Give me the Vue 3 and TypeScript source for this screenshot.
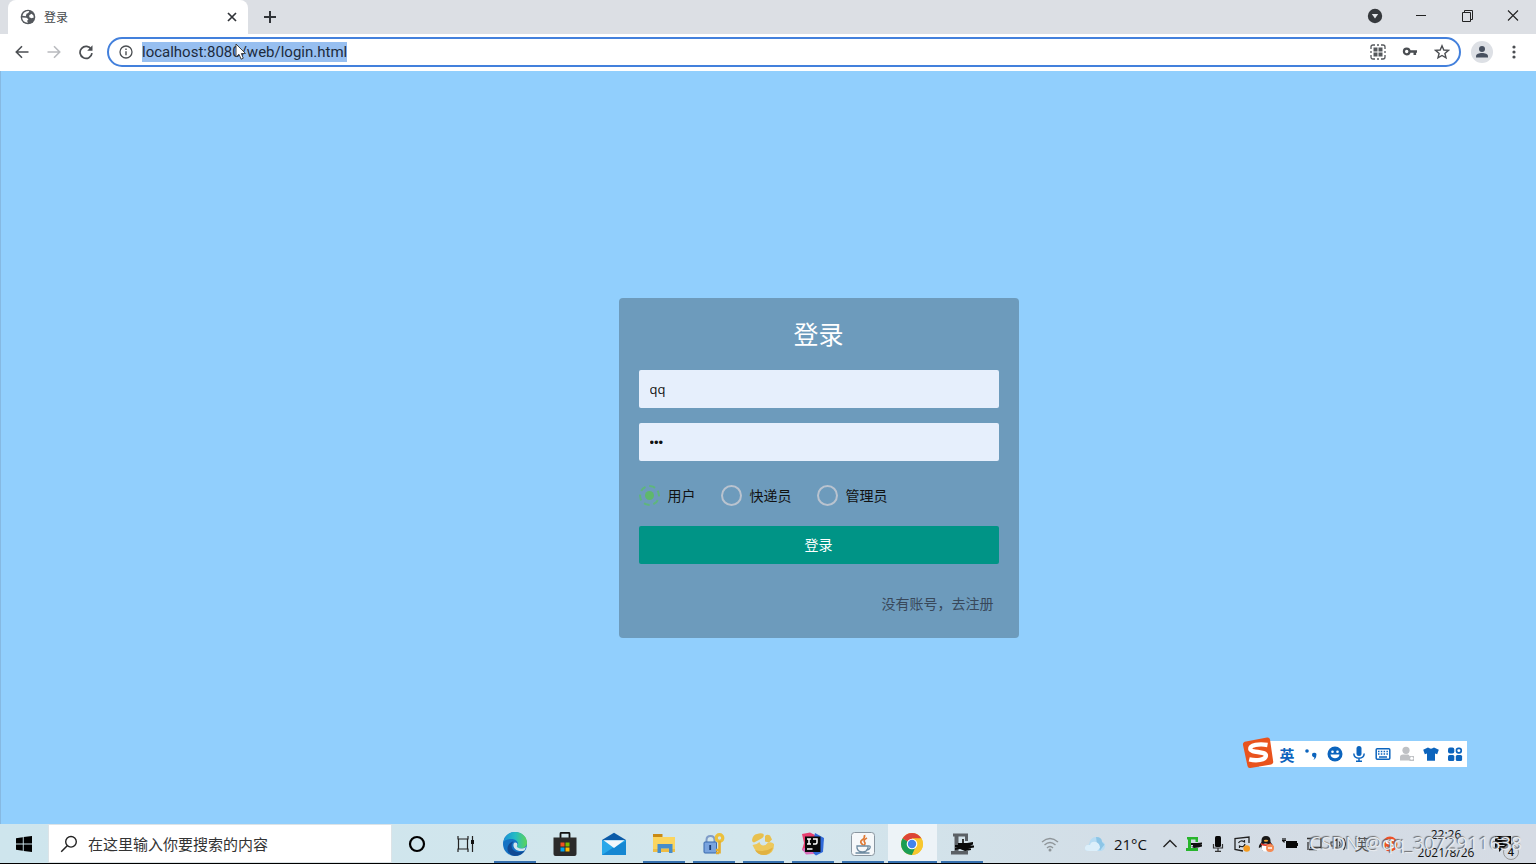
<script setup lang="ts">
import { ref } from 'vue'

interface Role {
  id: string
  label: string
}

const roles: Role[] = [
  { id: 'user', label: '用户' },
  { id: 'courier', label: '快递员' },
  { id: 'admin', label: '管理员' },
]

const role = ref<string>('user')
const username = ref<string>('qq')
const password = ref<string>('123')
const address = ref<string>('localhost:8080/web/login.html')
const search = ref<string>('')
</script>

<template>
  <div class="desktop">
    <header class="browser">
      <div class="tab-strip">
        <div class="tab">
          <svg class="globe" viewBox="0 0 16 16" aria-hidden="true">
            <circle cx="8" cy="8" r="7.300" fill="#54585d" />
            <path d="M9.300 2.100 8.300 4 6.500 4.800 5.800 7.300 2.400 6.800C3 4 5.500 2 9.300 2.100ZM2.200 8.600l4.300.2 1.900 1.500-1.200 1.400.6 2.200C4.600 13.600 2.300 11.600 2.200 8.600ZM9.300 6.300l2.200-1.500 1.800 1.400.5 2.300-2.300.8-2.200-1.100Z" fill="#fff" />
          </svg>
          <span class="tab-title">登录</span>
          <button class="icon-btn close-tab" aria-label="关闭标签页">
            <svg viewBox="0 0 12 12"><path d="m2 2 8 8m0-8-8 8" stroke="#303338" stroke-width="1.700" /></svg>
          </button>
        </div>
        <button class="icon-btn new-tab" aria-label="新标签页">
          <svg viewBox="0 0 14 14"><path d="M7 1v12M1 7h12" stroke="#303338" stroke-width="2" /></svg>
        </button>
        <div class="window-controls">
          <button class="icon-btn" aria-label="搜索标签页">
            <svg viewBox="0 0 16 16"><circle cx="8" cy="8" r="7.200" fill="#36393d" /><path d="M4.800 6h6.400L8 10.600Z" fill="#e4e6ea" /></svg>
          </button>
          <button class="icon-btn" aria-label="最小化">
            <svg viewBox="0 0 16 16"><path d="M3 7.500h10" stroke="#222" /></svg>
          </button>
          <button class="icon-btn" aria-label="还原">
            <svg viewBox="0 0 16 16"><path d="M3.500 4.500h8v9h-8ZM5.500 4.500v-2h8v9h-2" fill="none" stroke="#222" /></svg>
          </button>
          <button class="icon-btn" aria-label="关闭">
            <svg viewBox="0 0 16 16"><path d="m3 2.500 10 10m0-10-10 10" stroke="#222" stroke-width="1.100" /></svg>
          </button>
        </div>
      </div>

      <div class="toolbar">
        <div class="nav-buttons">
          <button class="icon-btn" aria-label="后退">
            <svg viewBox="0 0 16 16"><path d="M14.500 8H2.500M8 2.300 2.300 8 8 13.700" fill="none" stroke="#4b4e52" stroke-width="1.600" /></svg>
          </button>
          <button class="icon-btn" aria-label="前进">
            <svg viewBox="0 0 16 16"><path d="M1.500 8h12M8 2.300 13.700 8 8 13.700" fill="none" stroke="#b9bbbf" stroke-width="1.600" /></svg>
          </button>
          <button class="icon-btn" aria-label="刷新">
            <svg viewBox="0 0 16 16"><path d="M13.300 5.500A6 6 0 1 0 14 9.200" fill="none" stroke="#4b4e52" stroke-width="1.700" /><path d="M14.500 1.300v5.400H9.200Z" fill="#4b4e52" /></svg>
          </button>
        </div>
        <div class="omnibox">
          <svg class="icon" viewBox="0 0 16 16" aria-hidden="true"><circle cx="8" cy="8" r="6" fill="none" stroke="#4b4e52" stroke-width="1.300" /><path d="M8 7.200v4M8 4.600v1.500" stroke="#4b4e52" stroke-width="1.400" /></svg>
          <input v-model="address" class="address" type="text" aria-label="地址栏" />
          <div class="omnibox-actions">
            <button class="icon-btn" aria-label="二维码">
              <svg viewBox="0 0 16 16"><path d="M1 5V3q0-2 2-2h2M11 1h2q2 0 2 2v2M15 11v2q0 2-2 2h-2M5 15H3q-2 0-2-2v-2M7 1h2M7 15h2M1 7v2M15 7v2" fill="none" stroke="#55585c" stroke-width="1.300" /><path d="M3.500 3.500h4v4h-4ZM8.500 3.500h4v4h-4ZM3.500 8.500h4v4h-4ZM8.500 8.500h4v4h-4Z" fill="#55585c" /></svg>
            </button>
            <button class="icon-btn" aria-label="密码">
              <svg viewBox="0 0 16 16"><circle cx="4.700" cy="7.500" r="2.800" fill="none" stroke="#4b4e52" stroke-width="2.200" /><path d="M7.500 7.500H15M12.800 7.500V11" fill="none" stroke="#4b4e52" stroke-width="2.600" /></svg>
            </button>
            <button class="icon-btn" aria-label="收藏">
              <svg viewBox="0 0 16 16"><path d="m8 1.800 1.800 4.200 4.600.4-3.500 3 1.100 4.500L8 11.500l-4 2.400 1.100-4.500-3.500-3L6.200 6Z" fill="none" stroke="#4b4e52" stroke-width="1.400" /></svg>
            </button>
          </div>
        </div>
        <button class="icon-btn profile" aria-label="个人资料">
          <svg viewBox="0 0 22 22"><circle cx="11" cy="11" r="11" fill="#dde0e5" /><circle cx="11" cy="8" r="3" fill="#47505f" /><path d="M5 16.500v-1.300c0-2.200 3-3.200 6-3.200s6 1 6 3.200v1.300Z" fill="#47505f" /></svg>
        </button>
        <button class="icon-btn menu" aria-label="菜单">
          <svg viewBox="0 0 16 16"><circle cx="8" cy="3" r="1.600" fill="#4b4e52" /><circle cx="8" cy="8" r="1.600" fill="#4b4e52" /><circle cx="8" cy="13" r="1.600" fill="#4b4e52" /></svg>
        </button>
      </div>
      <svg class="cursor" viewBox="0 0 12 18" aria-hidden="true"><path d="M1 1v13l3-2.700 2.100 4.900 2.200-1-2-4.700h4.200Z" fill="#fff" stroke="#333" stroke-width=".9" /></svg>
    </header>

    <main class="page">
      <form class="card" @submit.prevent>
        <h1 class="card-title">登录</h1>
        <input v-model="username" class="field" type="text" aria-label="用户名" />
        <input v-model="password" class="field secret" type="password" aria-label="密码" />
        <div class="roles" role="radiogroup" aria-label="角色">
          <label v-for="r in roles" :key="r.id" class="role">
            <input v-model="role" class="radio" type="radio" name="role" :value="r.id" />
            <span>{{ r.label }}</span>
          </label>
        </div>
        <button class="submit" type="submit">登录</button>
        <a class="register" href="#register">没有账号，去注册</a>
      </form>
    </main>

    <div class="ime">
      <svg class="ime-logo" viewBox="0 0 32 32" aria-hidden="true">
        <path d="M4 4.500 25 .6q2.500-.4 3 2l3.200 21.800q.3 2.500-2 3L8.500 31q-2.500.5-3-2L1 8q-.5-3 3-3.500Z" fill="#e9531d" />
        <path d="M25.500 8C17 6.500 7.800 8 8.300 12.100 8.800 16 24.300 14 23.900 18.800c-.4 4.500-9.800 5.300-16.700 3.600" fill="none" stroke="#fff" stroke-width="4.400" />
      </svg>
      <button class="ime-btn ime-lang">英</button>
      <button class="ime-btn" aria-label="标点"><svg viewBox="0 0 16 16"><circle cx="4" cy="5" r="1.800" fill="#0c64bd" /><path d="M9 9a2.200 2.200 0 1 1 4.300.5c0 2-1.200 3.700-3 4.400.8-1 1.200-1.800 1.100-2.500C10 11.200 9 10 9 9Z" fill="#0c64bd" /></svg></button>
      <button class="ime-btn" aria-label="表情"><svg viewBox="0 0 16 16"><circle cx="8" cy="8" r="7.500" fill="#0c64bd" /><circle cx="5.500" cy="5.700" r="1.300" fill="#fff" /><circle cx="10.500" cy="5.700" r="1.300" fill="#fff" /><path d="M3.500 8.600h9c-.4 5-8.600 5-9 0Z" fill="#fff" /></svg></button>
      <button class="ime-btn" aria-label="语音"><svg viewBox="0 0 16 16"><rect x="5.500" y="0" width="5" height="10" rx="2.500" fill="#0c64bd" /><path d="M2.800 7.500c.3 6.300 10.100 6.300 10.400 0M8 12v3M5 15.200h6" fill="none" stroke="#0c64bd" stroke-width="1.500" /></svg></button>
      <button class="ime-btn" aria-label="软键盘"><svg viewBox="0 0 16 16"><rect x="1.200" y="2.700" width="13.600" height="10.600" rx="1" fill="none" stroke="#0c64bd" stroke-width="1.500" /><path d="M3 5.500h10M3 8h10" stroke="#0c64bd" stroke-width="1.500" stroke-dasharray="1.500 1.300" /><path d="M4 11h8" stroke="#0c64bd" stroke-width="1.500" /></svg></button>
      <button class="ime-btn" aria-label="账户"><svg viewBox="0 0 16 16"><circle cx="7" cy="4.300" r="3.600" fill="#bfc1c4" /><path d="M1 14.500V11q0-2.500 3-2.500h5q1.500 0 1.500 2v4ZM10.500 10h4.500v5h-4.500Z" fill="#bfc1c4" /><circle cx="12.700" cy="12.200" r="1.500" fill="#fff" /></svg></button>
      <button class="ime-btn" aria-label="皮肤"><svg viewBox="0 0 16 16"><path d="M5 1.500q3 2.300 6 0l4.800 2.300-1.600 4.400-2.200-.8v7.300H4V7.400l-2.200.8L.2 3.800Z" fill="#0c64bd" /></svg></button>
      <button class="ime-btn" aria-label="工具箱"><svg viewBox="0 0 16 16"><rect x="1" y="1.500" width="6.300" height="6" rx="2" fill="#0c64bd" /><rect x="9.500" y="2.300" width="4.700" height="4.500" rx="2" fill="none" stroke="#0c64bd" stroke-width="1.700" /><rect x="1" y="9" width="6.300" height="6" rx="1.500" fill="#0c64bd" /><rect x="8.800" y="9" width="6.300" height="6" rx="1.500" fill="#0c64bd" /></svg></button>
    </div>

    <footer class="taskbar">
      <button class="start" aria-label="开始">
        <svg viewBox="0 0 16 16"><path d="M0 2.200 6.800 1.200v6.300H0ZM7.700 1.100 16 0v7.500H7.700ZM0 8.400h6.800v6.400L0 13.800ZM7.700 8.400H16V16l-8.300-1.100Z" fill="#000" /></svg>
      </button>
      <label class="search">
        <svg viewBox="0 0 18 18" aria-hidden="true"><circle cx="11" cy="6.800" r="5.300" fill="none" stroke="#222" stroke-width="1.400" /><path d="m7.200 10.700-6 6" stroke="#222" stroke-width="1.500" /></svg>
        <input v-model="search" type="text" placeholder="在这里输入你要搜索的内容" aria-label="搜索" />
      </label>
      <div class="system-apps">
        <button class="task" aria-label="Cortana"><svg viewBox="0 0 24 24"><circle cx="12" cy="12" r="7" fill="none" stroke="#000" stroke-width="2.200" /></svg></button>
        <button class="task" aria-label="任务视图"><svg viewBox="0 0 24 24"><path d="M4 4v3h10V4M4 20v-3h10v3M4.500 7v10M13.500 7v10M18.500 4v16" fill="none" stroke="#222" stroke-width="1.200" /><path d="M17 8h3v4h-3Z" fill="#111" /></svg></button>
      </div>
      <div class="apps">
        <button class="task running" aria-label="Edge">
          <svg viewBox="0 0 24 24">
            <defs><linearGradient id="edge-top" x1="0" y1="0" x2="1" y2="0"><stop offset="0" stop-color="#1a8fd6" /><stop offset=".5" stop-color="#25bcc4" /><stop offset="1" stop-color="#5cd457" /></linearGradient></defs>
            <circle cx="12" cy="12" r="12" fill="#1572c4" />
            <path d="M.3 10C1.700 3.500 6.500 0 12 0c7 0 12 5 12 10.500 0 4-3 6-6.500 6-3 0-4-1.400-3.300-2.400C16.500 10.500 13 7 8.500 7 4 7 1 9 .3 10Z" fill="url(#edge-top)" />
            <path d="M8.800 12c-1.400 5 3.500 9.500 10.200 7.800l2.700-1.200C19 23 15 24 12 24 7 24 3 19 5 14c1-2.500 3-4 5.500-4.700Z" fill="#114a94" />
            <path d="M10.500 12c1-2.400 4-1.500 3.900.7-.1 1.300-1.200 1.700.2 2.900 2 1.400 5.500 1.300 8.400-.6l-1.500 3.500c-6 2-12-1.500-11-6.500Z" fill="#d3e6ed" />
          </svg>
        </button>
        <button class="task" aria-label="Microsoft Store">
          <svg viewBox="0 0 24 24"><path d="M7.500 6V1.800Q7.500.8 8.500.8h7q1 0 1 1V6" fill="none" stroke="#111" stroke-width="1.800" /><path d="M.5 5.500h23V22q0 2-2 2h-19q-2 0-2-2Z" fill="#2b2b2b" /><path d="M7.500 10.500h4v4h-4Z" fill="#f25022" /><path d="M12.500 10.500h4v4h-4Z" fill="#7fba00" /><path d="M7.500 15.500h4v4h-4Z" fill="#00a4ef" /><path d="M12.500 15.500h4v4h-4Z" fill="#ffb900" /></svg>
        </button>
        <button class="task" aria-label="邮件">
          <svg viewBox="0 0 24 24"><path d="M0 8 12 .8 24 8v5H0Z" fill="#0b5ba8" /><path d="M0 8.200h24V23H0Z" fill="#28a8ea" /><path d="M24 9v14H0l12-8Z" fill="#1687d2" /><path d="M1.500 8.200h21L12 16Z" fill="#f4f8fb" /></svg>
        </button>
        <button class="task running" aria-label="资源管理器">
          <svg viewBox="0 0 24 24"><path d="M1 2h9.500v4H1Z" fill="#c98a15" /><path d="M1 5h22v15H1Z" fill="#fbd55e" /><path d="M1 17h22v3H1Z" fill="#efbd45" /><path d="M5.500 21v-9h15v9H17v-4.500H9V21Z" fill="#468dcb" /></svg>
        </button>
        <button class="task running" aria-label="密钥管理">
          <svg viewBox="0 0 24 24"><path d="M4.500 10V8q0-4 4-4t4 4v2" fill="none" stroke="#7f9cc8" stroke-width="2" /><rect x="2" y="10" width="12.500" height="11" rx="1" fill="#7aa4de" stroke="#3768ad" /><path d="M8.200 13v5" stroke="#183c75" stroke-width="1.800" /><circle cx="17.500" cy="6" r="3.300" fill="none" stroke="#ecc03c" stroke-width="3.200" /><path d="M17.500 9v12.500M17 18h-3M17 21h-3" stroke="#e4ad2e" stroke-width="2.600" /></svg>
        </button>
        <button class="task running" aria-label="Navicat">
          <svg viewBox="0 0 24 24"><path d="M1 8Q2 2.500 6 2q4-1.500 6.500 0 1 3-2 4.500Q6 9 3 10.500 1 10 1 8ZM14 4q2-2 5-.5l2 4-3 3-4-1Z" fill="#e8c04e" /><path d="M1.500 13q4 0 7-3 1 4.500 6 3l2.500-2.500q4-1 6 1.500.5 9-8 11Q6 24 1.500 13Z" fill="#edc85c" /><path d="M4 18q9 3 18-2.500-3 7.500-9 7.500-6.500 0-9-5Z" fill="#e1b242" /></svg>
        </button>
        <button class="task running" aria-label="IntelliJ IDEA">
          <svg viewBox="0 0 24 24"><path d="m1 2 8-1.500L18 5 14 22H8L1 18l2-7Z" fill="#e83f6f" /><path d="m14 1 9 5-1 14-7 3.500-5-4Z" fill="#316ad9" /><path d="m1 17 8-3 4 8-8 .5Z" fill="#d86cbb" /><path d="M4 4.500h15.500v15.500H4Z" fill="#080808" /><path d="M6 7h4M8 7v5M6 12h4M12 7h4v3.500Q16 12 14.500 12H12M6 17h5.500" fill="none" stroke="#fff" stroke-width="1.500" /></svg>
        </button>
        <button class="task running" aria-label="Java">
          <svg viewBox="0 0 24 24"><rect x=".5" y=".5" width="23" height="23" rx="3" fill="#f5f8fa" stroke="#8a96a0" /><path d="M13.500 3Q14 6 11 8t1 5M16 6q-4 2-2.500 4t-1 3.500" fill="none" stroke="#df7a36" stroke-width="1.700" /><path d="M6 14h11v2q-1 4-5.500 4T6 16ZM17 14q3-.5 2 2t-4 2M4.500 21h14" fill="none" stroke="#6e8ba1" stroke-width="1.300" /></svg>
        </button>
        <button class="task running active" aria-label="Chrome">
          <svg viewBox="0 0 24 24"><circle cx="12" cy="12" r="11" fill="#f7c72f" /><path d="M12 12 2.500 6.500A11 11 0 0 1 21.500 6.500H12Z" fill="#dc4437" /><path d="M12 12 2.500 6.500A11 11 0 0 0 12 23l5-8.500Z" fill="#1b9e55" /><path d="M12 12h4.800L12 23a11 11 0 0 0 9.500-16.500H12Z" fill="#f7c72f" /><circle cx="12" cy="12" r="5.300" fill="#fff" /><circle cx="12" cy="12" r="4.200" fill="#4384ed" /></svg>
        </button>
        <button class="task running" aria-label="录屏">
          <svg viewBox="0 0 24 24"><path d="M3 1.500h15V9h-3V4.500H8.500V19H18v3.500H1V19h3.500V4.500H3Z" fill="#5c6166" /><path d="M12 7h2v4h-2Z" fill="#333" /><path d="M8 11h9l6-1v2.500l-3 1h4v2l-6 1h3V18l-6 1-5-2-5 1v-2l3-1H5v-2h3Z" fill="#0a0a0a" /></svg>
        </button>
      </div>

      <div class="tray">
        <svg class="wifi" viewBox="0 0 18 18" aria-hidden="true"><path d="M1 7q8-7 16 0M3.500 10q5.500-5 11 0M6 13q3-3 6 0" fill="none" stroke="#8f9599" stroke-width="1.400" /><circle cx="9" cy="15" r="1.500" fill="#8f9599" /></svg>
        <button class="weather">
          <svg viewBox="0 0 22 18" aria-hidden="true"><path d="M5 16q-5 0-4-4 1-3 4-2.500Q6 2 12 2q5 0 5.500 4Q22 8 21 12t-5 4Z" fill="#b7dcf3" /><path d="M12 2q6 0 6 5l2.500 2.500-4.500 6L13 9Z" fill="#8cc5e6" /><path d="M5 16q-5 0-4-4 1-3 5-2 1-4 6-3 4 1.500 4 6l-3 3Z" fill="#dceffa" /></svg>
          <span>21°C</span>
        </button>
        <div class="tray-icons">
          <button aria-label="显示隐藏的图标"><svg viewBox="0 0 16 16"><path d="m1.500 11 6.500-6.500 6.500 6.500" fill="none" stroke="#222" stroke-width="1.400" /></svg></button>
          <button aria-label="录屏状态"><svg viewBox="0 0 16 16"><path d="M1 1h11v5H9.500V3.500H5v8.500h7v3H0v-3h2V3.500H1Z" fill="#27b52c" /><path d="M5 7h6l5-.5v2l-2 .5h2v1.500l-4 1-4 .5-3-1.500h2V9H5Z" fill="#111" /></svg></button>
          <button aria-label="麦克风"><svg viewBox="0 0 16 16"><rect x="5" y="0" width="6" height="11" rx="1.500" fill="#080808" /><path d="M3.500 8v4h9V8M8 12v3.500M5 15.300h6" fill="none" stroke="#333" stroke-width="1.200" /></svg></button>
          <button aria-label="更新"><svg viewBox="0 0 16 16"><path d="M15 7V1L1 2.500v11L9 15" fill="none" stroke="#222" stroke-width="1.300" /><path d="M4.500 7q2-3.500 6-1V4M11 8q-1 4-5.500 2V12" fill="none" stroke="#222" stroke-width="1.200" /><circle cx="12.700" cy="12.500" r="3.300" fill="#f49b20" /></svg></button>
          <button aria-label="QQ"><svg viewBox="0 0 16 16"><path d="M3.500 6Q3 0 8 0t4.500 6q4 5 2.500 6l-2-1-2 4H5l-2-4-2 1Q0 10 3.500 6Z" fill="#171717" /><ellipse cx="7.500" cy="11.500" rx="4" ry="4" fill="#fff" /><ellipse cx="8" cy="4.800" rx="2.200" ry="1" fill="#f2a532" /><path d="M3 7q5 2.500 10 0v2Q8 11 3 9Z" fill="#dc3728" /><circle cx="12" cy="12" r="4" fill="#f58b54" /><path d="M10 12h4" stroke="#fff" stroke-width="1.400" /></svg></button>
          <button aria-label="电池"><svg viewBox="0 0 16 16"><path d="M4 5h11v7H4Z" fill="#080808" /><path d="M1 2v3q0 1 2 1M3 2v3M0 4.500h4M15.500 7v3" fill="none" stroke="#111" stroke-width="1.200" /></svg></button>
          <button aria-label="显示"><svg viewBox="0 0 16 16"><path d="M1 2.500h14v9H4M3 13.500h8M2 6v8" fill="none" stroke="#333" stroke-width="1.300" /></svg></button>
          <button aria-label="音量"><svg viewBox="0 0 16 16"><path d="M1 6h2.500L7 3v10l-3.500-3H1ZM9 5.500q2 2.500 0 5M11 3.500q4 4.500 0 9M13.500 2q4 6 0 12" fill="none" stroke="#333" stroke-width="1.100" /></svg></button>
          <button class="lang">英</button>
          <button class="sogou" aria-label="搜狗输入法"><svg viewBox="0 0 16 16"><circle cx="8" cy="8" r="7.500" fill="#ef5127" /><path d="M12 4.500C8 3.300 4 4.300 4.500 6.300S12 7.500 11.700 10 6 12.300 3.800 11.300" fill="none" stroke="#fff" stroke-width="1.700" /></svg></button>
        </div>
        <button class="clock"><span>22:26</span><span>2021/8/26</span></button>
        <button class="notice" aria-label="通知，4 条新通知">
          <svg viewBox="0 0 20 20" aria-hidden="true"><path d="M2 2h16v13H9l-3 3v-3H2Z" fill="#0b0b0b" /><path d="M4.500 5.500h11M4.500 8.500h11M4.500 11.500h7" stroke="#cfd5db" stroke-width="1.100" /></svg>
          <span class="count">4</span>
        </button>
      </div>
      <span class="watermark">CSDN @qq_3072911638</span>
    </footer>
  </div>
</template>

<style>
html,
body {
  margin: 0;
}
</style>

<style scoped>
.desktop {
  position: relative;
  display: flex;
  flex-direction: column;
  min-height: 100vh;
  overflow: hidden;
  background: #91cffd;
  color: #111;
  font-family: "Open Sans", "Noto Sans CJK SC", sans-serif;
  font-size: 14px;
}
.desktop * {
  box-sizing: border-box;
}
button,
input {
  margin: 0;
  padding: 0;
  border: 0;
  background: none;
  color: inherit;
  font-family: inherit;
  font-size: inherit;
  outline: none;
}
button {
  display: flex;
  align-items: center;
  justify-content: center;
  flex: none;
}
svg {
  display: block;
  flex: none;
}
.browser {
  position: relative;
}
.tab-strip {
  display: flex;
  align-items: center;
  height: 34px;
  padding-left: 8px;
  background: #dcdfe4;
}
.tab {
  display: flex;
  align-items: center;
  align-self: stretch;
  width: 240px;
  padding: 0 10px 0 12px;
  border-radius: 8px 8px 0 0;
  background: #fff;
}
.globe,
.icon-btn svg,
.icon {
  width: 16px;
  height: 16px;
}
.tab-title {
  flex: 1;
  margin-left: 8px;
  color: #45484c;
  font-size: 12px;
}
.close-tab svg {
  width: 12px;
  height: 12px;
}
.new-tab {
  width: 44px;
}
.new-tab svg {
  width: 14px;
  height: 14px;
}
.window-controls {
  display: grid;
  grid-template-columns: repeat(4, 46px);
  align-items: center;
  justify-items: center;
  margin-left: auto;
  padding-bottom: 2px;
}
.toolbar {
  display: flex;
  align-items: center;
  height: 37px;
  padding: 0 14px 2px;
  background: #fff;
}
.nav-buttons {
  display: flex;
  gap: 16px;
  margin-right: 13px;
}
.omnibox {
  display: flex;
  flex: 1;
  align-items: center;
  height: 30px;
  padding: 0 9px;
  border: 2px solid #4380dc;
  border-radius: 15px;
}
.address {
  field-sizing: content;
  height: 20px;
  margin-left: 8px;
  background: #97bff0;
  color: #1c2b3d;
  font-family: Roboto, sans-serif;
  font-size: 15px;
}
.omnibox-actions {
  display: flex;
  gap: 16px;
  margin-left: auto;
}
.profile {
  margin-left: 10px;
}
.profile svg {
  width: 22px;
  height: 22px;
}
.menu {
  margin-left: 13px;
}
.cursor {
  position: absolute;
  top: 43px;
  left: 235px;
  width: 12px;
  height: 18px;
}
.page {
  display: flex;
  flex: 1;
  align-items: center;
  justify-content: center;
  padding: 41px 0 0 100px;
  border-left: 1px solid #86b9e2;
}
.card {
  display: flex;
  flex-direction: column;
  width: 400px;
  padding: 0 20px 14px;
  border-radius: 4px;
  background: #6d9bbc;
}
.card-title {
  margin: 0;
  color: #fff;
  font-size: 25px;
  font-weight: 400;
  line-height: 72px;
  text-align: center;
}
.field {
  height: 38px;
  padding: 0 11px;
  border-radius: 2px;
  background: #e6effc;
  font-size: 13px;
}
.secret {
  margin-top: 15px;
  font-family: "Liberation Sans", sans-serif;
}
.roles {
  display: flex;
  gap: 25px;
  height: 38px;
  margin: 15px 0 12px;
}
.role {
  display: flex;
  align-items: center;
  gap: 8px;
}
.radio {
  display: grid;
  place-items: center;
  width: 21px;
  height: 21px;
  border: 2px solid #b9c3cf;
  border-radius: 50%;
  appearance: none;
}
.radio:checked {
  border: 2px dashed #5fb67c;
}
.radio:checked::before {
  width: 9px;
  height: 9px;
  border-radius: 50%;
  background: #5fb86c;
  content: "";
}
.submit {
  height: 38px;
  padding-bottom: 2px;
  border-radius: 2px;
  background: #009486;
  color: #fff;
}
.register {
  align-self: flex-end;
  margin: 20px 5px 0 0;
  color: #38485a;
  line-height: 40px;
  text-decoration: none;
}
.ime {
  position: absolute;
  right: 69px;
  bottom: 97px;
  display: flex;
  align-items: center;
  height: 26px;
  background: #fff;
}
.ime-logo {
  width: 32px;
  height: 32px;
  margin: -2px 1px 0 -17px;
}
.ime-btn {
  width: 24px;
  height: 26px;
  color: #0c64bd;
}
.ime-btn svg {
  width: 16px;
  height: 16px;
}
.ime-lang {
  font-size: 15px;
  font-weight: 700;
}
.taskbar {
  position: relative;
  display: flex;
  height: 40px;
  border-bottom: 1px solid #000;
  background: linear-gradient(90deg, #cee5ed, #d2e6ed 50%, #d3dde6 75%, #d5dbe4);
}
.start {
  width: 48px;
}
.start svg {
  width: 16px;
  height: 16px;
}
.search {
  display: flex;
  align-items: center;
  width: 344px;
  padding-left: 11px;
  border: 1px solid #dce3e7;
  background: #fff;
}
.search svg {
  width: 18px;
  height: 18px;
}
.search input {
  flex: 1;
  margin-left: 10px;
  font-size: 15px;
}
.search input::placeholder {
  color: #333;
}
.system-apps {
  display: grid;
  grid-template-columns: 1fr 1fr;
  width: 98px;
}
.apps {
  display: grid;
  grid-template-columns: repeat(10, 1fr);
  width: 497px;
}
.task {
  position: relative;
}
.task svg {
  width: 24px;
  height: 24px;
}
.running::after {
  position: absolute;
  right: 4px;
  bottom: 0;
  left: 4px;
  height: 2px;
  background: #356fae;
  content: "";
}
.active {
  background: #edf3f7;
}
.active::after {
  right: 0;
  left: 0;
}
.tray {
  display: flex;
  align-items: center;
  margin-left: auto;
  padding-right: 16px;
}
.wifi {
  width: 18px;
  height: 18px;
  margin-right: 25px;
}
.weather {
  gap: 8px;
  margin-right: 11px;
  font-size: 15px;
}
.weather svg {
  width: 22px;
  height: 18px;
}
.tray-icons {
  display: flex;
}
.tray-icons button {
  width: 24px;
}
.tray-icons svg {
  width: 16px;
  height: 16px;
}
.tray-icons .lang {
  color: #555;
  font-size: 15px;
}
.tray-icons .sogou {
  width: 32px;
}
.clock {
  flex-direction: column;
  width: 80px;
  font-size: 12px;
  line-height: 18px;
}
.notice {
  position: relative;
  width: 34px;
  height: 39px;
}
.notice svg {
  width: 20px;
  height: 20px;
}
.count {
  position: absolute;
  right: 1px;
  bottom: 3px;
  width: 16px;
  height: 16px;
  border: 1px solid #999;
  border-radius: 50%;
  background: #d5dbe4;
  font-size: 11px;
  font-weight: 600;
  line-height: 14px;
  text-align: center;
}
.watermark {
  position: absolute;
  right: 14px;
  bottom: 6px;
  color: #e6eaef;
  font-size: 19px;
  line-height: 28px;
  text-shadow: -1px -1px 1px #666;
  pointer-events: none;
}
</style>
